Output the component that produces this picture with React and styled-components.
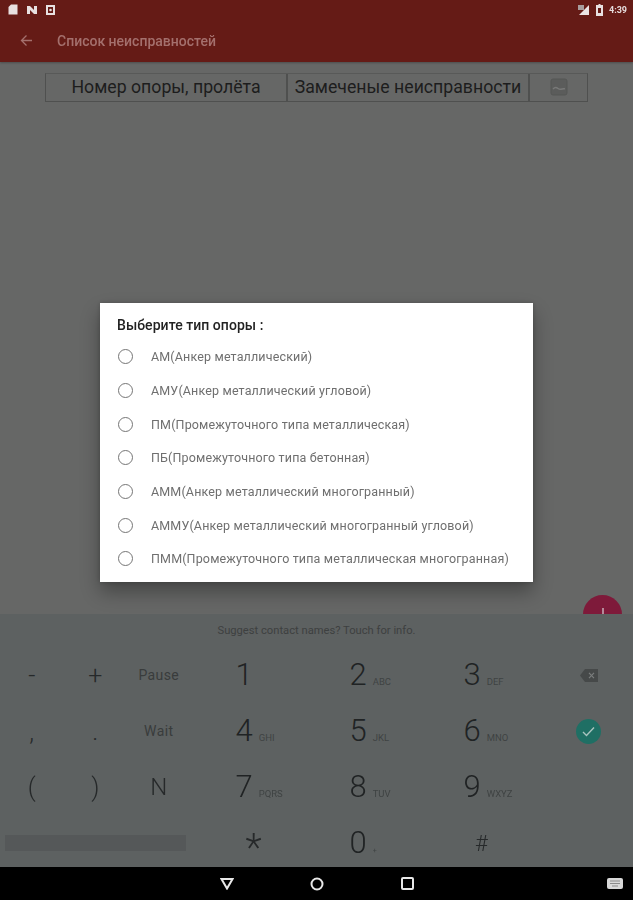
import React from 'react';
import styled, { createGlobalStyle } from 'styled-components';

const GlobalStyle = createGlobalStyle`
	html, body {
		margin: 0;
		padding: 0;
		background: #666766;
	}
	body {
		font-family: Roboto, "Liberation Sans", sans-serif;
	}
`;

const Screen = styled.div`
	width: 633px;
	height: 900px;
	display: flex;
	flex-direction: column;
	overflow: hidden;
	filter: blur(0.6px);
`;

const Header = styled.header`
	height: 62px;
	background: #651b16;
	box-shadow: 0 1px 2px rgba(0, 0, 0, 0.25);
	position: relative;
	z-index: 1;
`;

const StatusBar = styled.div`
	height: 19px;
	padding: 0 6px 0 8px;
	display: flex;
	align-items: center;
	justify-content: space-between;
`;

const StatusGroup = styled.div`
	display: flex;
	align-items: center;
	gap: ${(p) => p.$gap}px;
`;

const Clock = styled.span`
	font-size: 9px;
	font-weight: 700;
	color: #e6dcdc;
`;

const AppBar = styled.div`
	height: 43px;
	padding-left: 20px;
	display: flex;
	align-items: center;
	gap: 24px;
`;

const Title = styled.h1`
	margin: 0;
	font-size: 14px;
	font-weight: 500;
	color: #a4706d;
`;

const Content = styled.main`
	flex: 1;
	position: relative;
	background: #666766;
	padding: 11px 45px 0;
`;

const HeadRow = styled.div`
	display: grid;
	grid-template-columns: 240px 242px 1fr;
	height: 29px;
	box-sizing: border-box;
	border: 1px solid #4f504f;
	border-top-color: #585958;
`;

const HeadCell = styled.div`
	display: flex;
	align-items: center;
	justify-content: center;
	padding-bottom: 2px;
	font-size: 17.7px;
	color: #1d1d1d;
	white-space: nowrap;
	border-left: ${(p) => (p.$divided ? '2px solid #4f504f' : '0')};
`;

const Dialog = styled.section`
	position: absolute;
	left: 100px;
	top: 241px;
	width: 433px;
	height: 279px;
	box-sizing: border-box;
	padding: 15px 0 0 17px;
	background: #fff;
	box-shadow: 0 10px 18px rgba(0, 0, 0, 0.32), 0 0 5px rgba(0, 0, 0, 0.2);
`;

const DialogTitle = styled.h2`
	margin: 0 0 7px;
	height: 15px;
	line-height: 15px;
	font-size: 14px;
	letter-spacing: 0.05px;
	font-weight: 500;
	color: #222;
`;

const Option = styled.label`
	height: 33.7px;
	display: flex;
	align-items: center;
	gap: 18px;
	padding-left: 1px;
	font-size: 12.5px;
	letter-spacing: 0.15px;
	color: #6f6f6f;
	white-space: nowrap;
`;

const Radio = styled.span`
	width: 15px;
	height: 15px;
	box-sizing: border-box;
	border: 1.7px solid #757575;
	border-radius: 50%;
`;

const Fab = styled.div`
	position: absolute;
	left: 583px;
	top: 533px;
	width: 39px;
	height: 39px;
	border-radius: 50%;
	background: #7e1a3a;
	display: flex;
	justify-content: center;
	padding-top: 13px;
	box-sizing: border-box;
`;

const FabBar = styled.span`
	width: 2px;
	height: 8px;
	background: #b58a9a;
`;

const Keyboard = styled.div`
	height: 253px;
	background: #5d6161;
	position: relative;
	z-index: 1;
`;

const Suggest = styled.div`
	height: 33px;
	display: flex;
	align-items: center;
	justify-content: center;
	font-size: 11.2px;
	color: #3d4040;
`;

const Keys = styled.div`
	display: grid;
	grid-template-columns: repeat(3, 63.5px) 6px repeat(3, 114px) 1fr;
	grid-auto-rows: 56px;
`;

const Key = styled.div`
	grid-column: ${(p) => p.$col};
	display: flex;
	align-items: center;
	justify-content: center;
	padding-top: ${(p) => p.$drop || 0}px;
	box-sizing: border-box;
	color: #26292a;
	font-size: ${(p) => p.$size || 25}px;
	font-weight: 300;
`;

const SideKey = styled(Key)`
	padding-left: 6px;
`;

const WordKey = styled(Key)`
	font-size: 14px;
	font-weight: 400;
	color: #393c3c;
	letter-spacing: 0.4px;
`;

const DigitKey = styled(Key)`
	justify-content: flex-start;
	align-items: baseline;
	padding: 11px 0 0 39px;
	gap: 6px;
`;

const Digit = styled.span`
	font-size: 31px;
	font-weight: 300;
	line-height: 34px;
	color: #202324;
`;

const Letters = styled.span`
	font-size: ${(p) => (p.$small ? 7 : 9.5)}px;
	font-weight: 400;
	color: #3f4343;
`;

const SpaceBar = styled.div`
	grid-column: 1 / span 3;
	align-self: center;
	margin: 0 5px;
	height: 16px;
	background: #555859;
`;

const DoneButton = styled.div`
	width: 25px;
	height: 25px;
	border-radius: 50%;
	background: #1f6f64;
	display: flex;
	align-items: center;
	justify-content: center;
`;

const NavBar = styled.nav`
	height: 33px;
	background: #000;
	padding-left: 182px;
	display: grid;
	grid-template-columns: 90px 90px 90px 1fr;
	align-items: center;
	justify-items: center;
	position: relative;
	z-index: 1;
`;

const KeyboardIcon = styled.svg`
	justify-self: end;
	margin-right: 10px;
`;

const options = [
	'АМ(Анкер металлический)',
	'АМУ(Анкер металлический угловой)',
	'ПМ(Промежуточного типа металлическая)',
	'ПБ(Промежуточного типа бетонная)',
	'АММ(Анкер металлический многогранный)',
	'АММУ(Анкер металлический многогранный угловой)',
	'ПММ(Промежуточного типа металлическая многогранная)',
];

const digits = [
	{ d: '1', l: '', col: 5 },
	{ d: '2', l: 'ABC', col: 6 },
	{ d: '3', l: 'DEF', col: 7 },
	{ d: '4', l: 'GHI', col: 5 },
	{ d: '5', l: 'JKL', col: 6 },
	{ d: '6', l: 'MNO', col: 7 },
	{ d: '7', l: 'PQRS', col: 5 },
	{ d: '8', l: 'TUV', col: 6 },
	{ d: '9', l: 'WXYZ', col: 7 },
];

const DigitRow = ({ from }) =>
	digits.slice(from, from + 3).map((k) => (
		<DigitKey key={k.d} $col={k.col}>
			<Digit>{k.d}</Digit>
			<Letters>{k.l}</Letters>
		</DigitKey>
	));

const App = () => {
	return (
		<Screen>
			<GlobalStyle />
			<Header>
				<StatusBar>
					<StatusGroup $gap={9}>
						<svg width="10" height="11" viewBox="0 0 10 11">
							<path d="M3 .5h6.500v10H.5V3z" fill="#e8e0e0" />
						</svg>
						<svg width="10" height="10" viewBox="0 0 10 10">
							<path d="M0 1h3l4 4V1h3v8H7L3 5v4H0z" fill="#e8e0e0" />
						</svg>
						<svg width="9" height="10" viewBox="0 0 9 10">
							<path fillRule="evenodd" d="M0 0h9v10H0zM2 2v6h5V2z" fill="#e8e0e0" />
							<circle cx="4.500" cy="5" r="1.300" fill="#e8e0e0" />
						</svg>
					</StatusGroup>
					<StatusGroup $gap={6}>
						<svg width="12" height="12" viewBox="0 0 12 12">
							<path d="M11 1v10H1z" fill="#ece4e4" />
							<path d="M0 1h6v5H0z" fill="#a89c9c" />
						</svg>
						<svg width="7" height="12" viewBox="0 0 7 12">
							<path fillRule="evenodd" d="M2.500 0h2v1H7v11H0V1h2.500zM2 4v5h3V4z" fill="#e8e0e0" />
						</svg>
						<Clock>4:39</Clock>
					</StatusGroup>
				</StatusBar>
				<AppBar>
					<svg width="13" height="13" viewBox="0 0 13 13" fill="none" stroke="#a4706d" strokeWidth="1.300">
						<path d="M12 6.500H1.500M6.500 1.500l-5 5 5 5" />
					</svg>
					<Title>Список неисправностей</Title>
				</AppBar>
			</Header>

			<Content>
				<HeadRow>
					<HeadCell>Номер опоры, пролёта</HeadCell>
					<HeadCell $divided>Замеченые неисправности</HeadCell>
					<HeadCell $divided>
						<svg width="18" height="18" viewBox="0 0 18 18" fill="none">
							<rect x="1" y="1" width="16" height="16" rx="2" fill="#5b5c5b" stroke="#555655" />
							<path d="M3 11c2-2 3-2 5-.5s3 1 7 0" stroke="#787978" strokeWidth="1.500" />
						</svg>
					</HeadCell>
				</HeadRow>

				<Dialog>
					<DialogTitle>Выберите тип опоры :</DialogTitle>
					{options.map((text) => (
						<Option key={text}>
							<Radio />
							{text}
						</Option>
					))}
				</Dialog>

				<Fab>
					<FabBar />
				</Fab>
			</Content>

			<Keyboard>
				<Suggest>Suggest contact names? Touch for info.</Suggest>
				<Keys>
					<Key $col={1}>-</Key>
					<Key $col={2}>+</Key>
					<WordKey $col={3}>Pause</WordKey>
					<DigitRow from={0} />
					<SideKey $col={8}>
						<svg width="18" height="13" viewBox="0 0 18 13">
							<path d="M5 0h13v13H5L0 6.500z" fill="#464949" />
							<path d="M9 3.800l5 5.400M14 3.800l-5 5.400" stroke="#7a7d7d" strokeWidth="1.200" />
						</svg>
					</SideKey>

					<Key $col={1}>,</Key>
					<Key $col={2}>.</Key>
					<WordKey $col={3}>Wait</WordKey>
					<DigitRow from={3} />
					<SideKey $col={8}>
						<DoneButton>
							<svg width="13" height="11" viewBox="0 0 13 11" fill="none" stroke="#a9c4bf" strokeWidth="1.400">
								<path d="M1 6l3.500 3.500L12 1.500" />
							</svg>
						</DoneButton>
					</SideKey>

					<Key $col={1}>(</Key>
					<Key $col={2}>)</Key>
					<Key $col={3} $size={24}>N</Key>
					<DigitRow from={6} />
					<Key $col={8} />

					<SpaceBar />
					<Key $col={5} $size={38} $drop={10}>*</Key>
					<DigitKey $col={6}>
						<Digit>0</Digit>
						<Letters $small>+</Letters>
					</DigitKey>
					<Key $col={7} $size={22}>#</Key>
				</Keys>
			</Keyboard>

			<NavBar>
				<svg width="14" height="12" viewBox="0 0 14 12" fill="none" stroke="#e8e8e8" strokeWidth="2">
					<path d="M1.500 1h11L7 10.500z" />
				</svg>
				<svg width="14" height="14" viewBox="0 0 14 14" fill="none" stroke="#e8e8e8" strokeWidth="2">
					<circle cx="7" cy="7" r="5.500" />
				</svg>
				<svg width="13" height="13" viewBox="0 0 13 13" fill="none" stroke="#e8e8e8" strokeWidth="2">
					<rect x="1" y="1" width="11" height="11" rx="1" />
				</svg>
				<KeyboardIcon width="16" height="12" viewBox="0 0 16 12">
					<rect width="16" height="11" rx="2" fill="#d8d8d8" />
					<path d="M3 3h10M3 5.500h10M5 8h6" stroke="#8a8a8a" />
				</KeyboardIcon>
			</NavBar>
		</Screen>
	);
};

export default App;
